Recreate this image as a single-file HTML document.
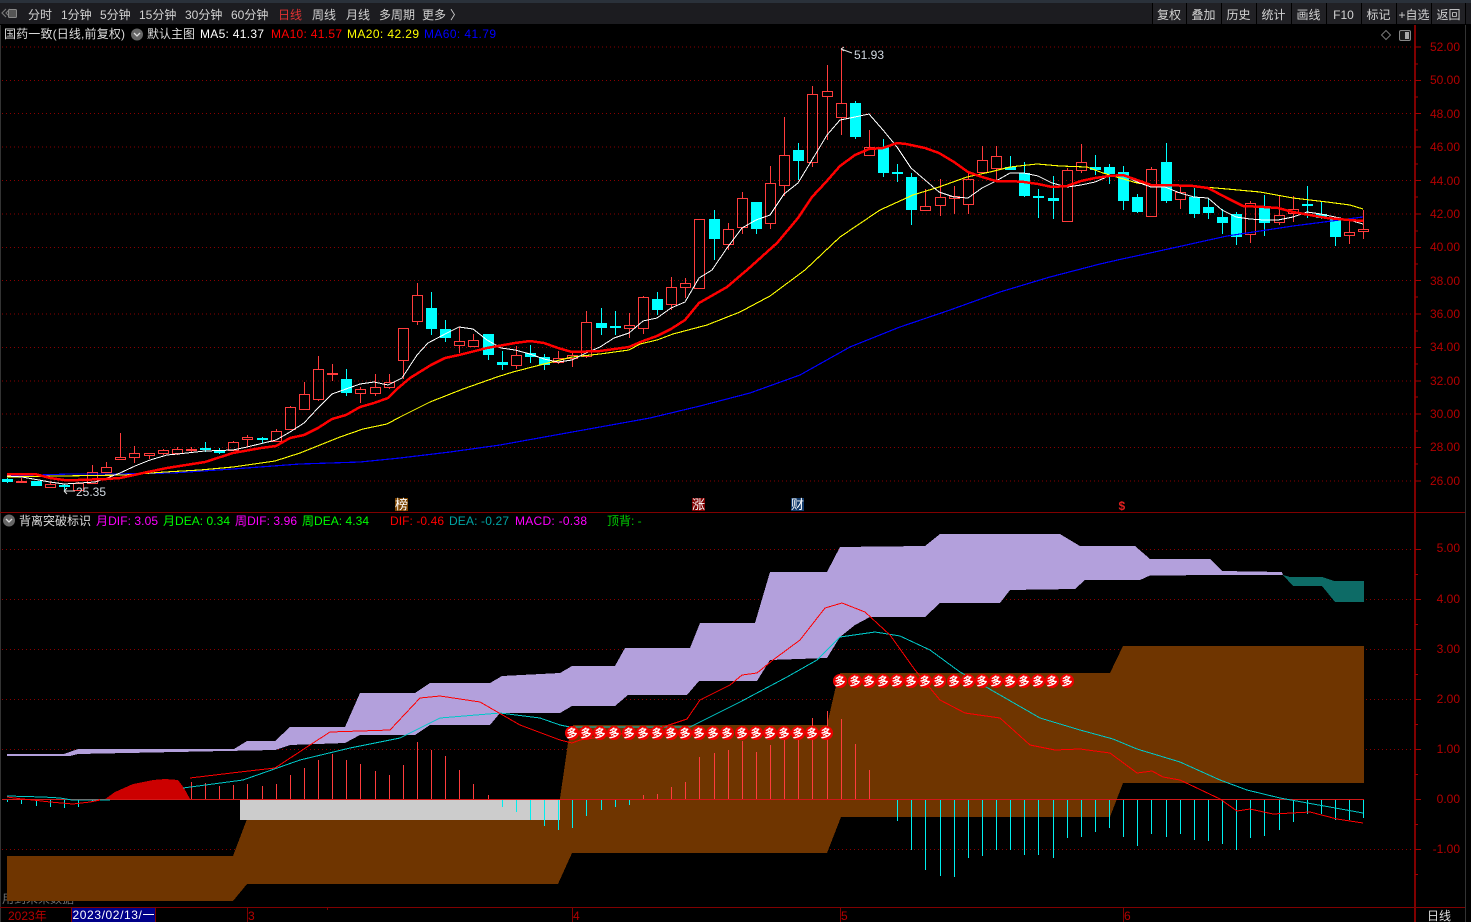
<!DOCTYPE html>
<html lang="zh"><head><meta charset="utf-8"><title>K线</title>
<style>
html,body{margin:0;padding:0;background:#000;width:1471px;height:922px;overflow:hidden}
svg{display:block;position:absolute;left:0;top:0}
text{font-family:"Liberation Sans","Noto Sans CJK SC",sans-serif;font-size:12px;white-space:pre}
.a{fill:#b40000}
.t{fill:#d2d2d2}
.l{fill:none;shape-rendering:crispEdges;stroke-linejoin:round}
</style></head><body>
<svg id="s" width="1471" height="922" viewBox="0 0 1471 922" xmlns="http://www.w3.org/2000/svg">
<rect width="1471" height="922" fill="#000"/>
<!-- toolbar -->
<rect width="1471" height="24" fill="#1c1c20"/>
<rect width="1471" height="3" fill="#2a313a"/>
<rect x="1152" y="3" width="314" height="21" fill="#212125"/>
<path d="M1152.500 3V24M1186.500 3V24M1221.500 3V24M1256.500 3V24M1291.500 3V24M1326.500 3V24M1361.500 3V24M1396.500 3V24M1431.500 3V24M1465.500 3V24" stroke="#000" shape-rendering="crispEdges"/>
<path d="M6 9l-4 4 4 4M10 9l-4 4 4 4" fill="none" stroke="#777" stroke-width="1.2"/>
<rect x="8.500" y="9.500" width="8" height="8" rx="1" fill="#555" stroke="#888"/>
<g class="t">
<text x="28" y="19">分时</text><text x="61" y="19">1分钟</text><text x="100" y="19">5分钟</text><text x="139" y="19">15分钟</text><text x="185" y="19">30分钟</text><text x="231" y="19">60分钟</text>
<text x="278" y="19" style="fill:#e03232">日线</text><text x="312" y="19">周线</text><text x="346" y="19">月线</text><text x="379" y="19">多周期</text><text x="422" y="19">更多</text><text x="450" y="19">〉</text>
<g text-anchor="middle"><text x="1169" y="19">复权</text><text x="1203.500" y="19">叠加</text><text x="1238.500" y="19">历史</text><text x="1273.500" y="19">统计</text><text x="1308.500" y="19">画线</text><text x="1343.500" y="19">F10</text><text x="1378.500" y="19">标记</text><text x="1414" y="19">+自选</text><text x="1448.500" y="19">返回</text></g>
</g>
<!-- grid -->
<g stroke="#8a0000" stroke-dasharray="1 3" shape-rendering="crispEdges">
<path id="g1" d="M2 47H1415M2 80.500H1415M2 113.500H1415M2 147H1415M2 180.500H1415M2 214H1415M2 247.500H1415M2 280.500H1415M2 314H1415M2 347.500H1415M2 381H1415M2 414H1415M2 447.500H1415M2 481H1415"/>
<path d="M2 549.500H1415M2 599.500H1415M2 649.500H1415M2 699.500H1415M2 749.500H1415M2 849.500H1415"/>
</g>
<!-- frame -->
<path d="M0.500 25V922" stroke="#333" shape-rendering="crispEdges"/>
<path d="M1465.500 25V922" stroke="#333" shape-rendering="crispEdges"/>
<path d="M1415 25V922" stroke="#800000" stroke-width="2" shape-rendering="crispEdges"/>
<path d="M0 512.500H1465M0 907.500H1465" stroke="#800000" shape-rendering="crispEdges"/>
<path d="M1415 47h6M1415 80.500h6M1415 113.500h6M1415 147h6M1415 180.500h6M1415 214h6M1415 247.500h6M1415 280.500h6M1415 314h6M1415 347.500h6M1415 381h6M1415 414h6M1415 447.500h6M1415 481h6M1415 64h3M1415 97h3M1415 130h3M1415 164h3M1415 197h3M1415 231h3M1415 264h3M1415 297h3M1415 331h3M1415 364h3M1415 397h3M1415 431h3M1415 464h3M1415 549.500h6M1415 599.500h6M1415 649.500h6M1415 699.500h6M1415 749.500h6M1415 799.500h6M1415 849.500h6M1415 574.500h3M1415 624.500h3M1415 674.500h3M1415 724.500h3M1415 774.500h3M1415 824.500h3M1415 874.500h3" stroke="#a00000" shape-rendering="crispEdges"/>
<g class="a" text-anchor="end">
<text x="1460" y="51">52.00</text><text x="1460" y="84">50.00</text><text x="1460" y="118">48.00</text><text x="1460" y="151">46.00</text><text x="1460" y="185">44.00</text><text x="1460" y="218">42.00</text><text x="1460" y="251">40.00</text><text x="1460" y="285">38.00</text><text x="1460" y="318">36.00</text><text x="1460" y="351">34.00</text><text x="1460" y="385">32.00</text><text x="1460" y="418">30.00</text><text x="1460" y="451">28.00</text><text x="1460" y="485">26.00</text>
<text x="1460" y="552">5.00</text><text x="1460" y="603">4.00</text><text x="1460" y="653">3.00</text><text x="1460" y="703">2.00</text><text x="1460" y="753">1.00</text><text x="1460" y="803">0.00</text><text x="1460" y="853">-1.00</text>
</g>
<!-- info lines -->
<text x="4" y="38" textLength="121" style="fill:#dcdcdc">国药一致(日线,前复权)</text>
<circle cx="137" cy="34.500" r="6" fill="#666"/><path d="M134 33l3 3 3-3" fill="none" stroke="#ddd" stroke-width="1.300"/>
<text x="147" y="38" style="fill:#dcdcdc">默认主图</text>
<text x="200" y="38" textLength="64" style="fill:#fff">MA5: 41.37</text>
<text x="271" y="38" textLength="71" style="fill:#ff0000">MA10: 41.57</text>
<text x="347" y="38" textLength="72" style="fill:#ffff00">MA20: 42.29</text>
<text x="424" y="38" textLength="72" style="fill:#0000ff">MA60: 41.79</text>
<path d="M1386 30.500l4.500 4.500-4.500 4.500-4.500-4.500z" fill="none" stroke="#777"/>
<rect x="1399.500" y="30.500" width="11" height="10" rx="1.500" fill="#1c1c1c" stroke="#888"/><rect x="1405" y="32" width="4" height="7" fill="#aaa"/>
<circle cx="9" cy="520.500" r="6" fill="#666"/><path d="M6 519l3 3 3-3" fill="none" stroke="#ddd" stroke-width="1.300"/>
<text x="19" y="525" style="fill:#dcdcdc">背离突破标识</text>
<text x="96" y="525" textLength="62" style="fill:#ff00ff">月DIF: 3.05</text>
<text x="163" y="525" textLength="67" style="fill:#00ff00">月DEA: 0.34</text>
<text x="235" y="525" textLength="62" style="fill:#ff00ff">周DIF: 3.96</text>
<text x="302" y="525" textLength="67" style="fill:#00ff00">周DEA: 4.34</text>
<text x="390" y="525" textLength="54" style="fill:#ff0000">DIF: -0.46</text>
<text x="449" y="525" textLength="60" style="fill:#00a5a5">DEA: -0.27</text>
<text x="515" y="525" textLength="72" style="fill:#ff00ff">MACD: -0.38</text>
<text x="607" y="525" style="fill:#00d000">顶背: -</text>
<!-- faint text -->
<text x="2" y="903" style="fill:#707070">用到未来数据</text>
<!-- bands -->
<g shape-rendering="crispEdges">
<path fill="#b3a0dc" d="M7 754L64 754L78 749L234 749L247 741L275 741L290 727L345 727L360 693L415 693L430 683L490 683L502 676L560 673L572 666L615 666L625 648L690 648L700 623L755 623L770 572L827 572L840 547L925 546L940 534L1060 534L1080 546L1135 546L1150 559L1210 559L1222 571L1282 572L1283 575L1222 575L1150 575.500L1140 580L1085 580L1075 589L1010 590L1000 603L940 603L925 617L870 617L855 625L840 637L827 658L770 660L757 681L699 681L687 695L628 695L615 706L572 706L560 713L500 713L490 725L430 725L415 735L360 735L345 743L290 745L275 750L78 754L70 756L7 756Z"/>
<path fill="#0d6b66" d="M1283 575L1290 577L1322 577L1334 581L1364 581L1364 602L1335 602L1322 586L1293 586Z"/>
<path fill="#6f3500" d="M7 856L233 856L247 819L557 819L568 743L573 725L827 725L835 690L840 673L1110 673L1123 646L1364 646L1364 783L1123 783L1110 817L841 817L827 853L572 853L558 884L247 884L233 901L7 901Z"/>
<rect x="240" y="800" width="320" height="20" fill="#cccccc"/>
<path fill="#cc0000" d="M104 800L108 797L115 792L124 788L133 784L143 782L153 780L165 779L178 780L184 788L190 799L190 800Z"/>
<path d="M2 799.500H1364" stroke="#d01818"/>
</g>
<!-- labels -->
<rect x="395" y="498" width="13" height="13" fill="#7a4300"/><text x="395" y="509" style="fill:#fff;font-size:13px">榜</text>
<rect x="692" y="498" width="13" height="13" fill="#7d0000"/><text x="692" y="509" style="fill:#fff;font-size:13px">涨</text>
<rect x="791" y="498" width="13" height="13" fill="#123a6a"/><text x="791" y="509" style="fill:#fff;font-size:13px">财</text>
<text x="1118.500" y="510" style="fill:#e02020;font-weight:700">$</text>
<g id="k"></g>
<!-- MA lines -->
<polyline class="l" stroke="#0000ff" stroke-width="1.200" points="7,476 70,474 117,474 173,473 233,469 300,464 360,462 400,458 450,452 500,445 600,427 650,418 700,406 750,393 800,375 850,347 900,327 950,310 1000,292 1050,277 1100,264 1122,259 1150,253 1227,236 1293,226 1363,217"/>
<polyline class="l" stroke="#ffff00" stroke-width="1.100" points="7,477 60,476 125,475 165,472 200,470 233,467 275,461 300,453 320,445 340,437 363,429 387,424 400,417 430,402 463,389 497,377 513,372 540,365 572,357 600,354 629,350 640,344 657,340 673,334 707,325 740,312 770,296 805,270 840,237 880,210 913,195 939,187 967,177 990,172 1010,167 1037,164 1060,166 1087,167 1103,173 1137,183 1160,186 1193,186 1227,189 1260,192 1293,198 1327,202 1350,205 1363,209"/>
<polyline class="l" stroke="#ffffff" stroke-width="1" points="7,476 22,477 50,482 64,484 95,482 107,478 120,473 135,466 150,460 167,455 178,454 205,451 233,450 247,447 276,440 290,432 304,423 318,408 332,394 346,389 360,384 374,382 388,385 402,378 417,355 428,343 447,333 459,327 473,329 487,340 501,348 515,350 530,354 544,359 558,362 572,360 586,353 600,347 614,338 629,333 643,321 657,318 671,308 685,302 699,278 712,270 727,248 742,228 756,220 770,215 784,194 798,183 815,155 827,135 840,120 855,117 869,114 883,130 897,147 911,168 925,180 939,192 954,197 968,198 982,188 996,181 1010,173 1024,173 1038,176 1052,183 1067,187 1081,185 1095,182 1109,176 1123,175 1137,182 1151,187 1165,187 1180,193 1194,197 1208,198 1222,210 1236,217 1250,219 1264,220 1278,220 1293,217 1307,212 1321,214 1335,217 1349,220 1363,224"/>
<polyline class="l" stroke="#ff0000" stroke-width="2.500" points="7,474 35,474 50,478 64,480 78,480 106,479 120,478 134,475 143,473 167,468 205,462 233,453 261,448 276,446 290,438 304,435 318,428 332,419 346,415 360,407 374,403 388,398 397,389 410,378 431,365 445,358 459,355 487,348 515,343 530,341 544,343 558,348 572,352 600,351 629,347 643,341 657,336 671,329 685,320 699,303 713,295 727,287 741,275 747,270 777,243 798,218 812,197 826,182 840,166 855,155 869,149 883,148 897,143 906,144 925,148 939,153 954,162 968,172 982,177 996,181 1010,181 1024,182 1038,184 1052,187 1067,186 1081,181 1095,178 1109,176 1123,175 1137,180 1151,185 1165,185 1193,186 1208,188 1227,198 1243,206 1264,207 1278,208 1293,212 1327,218 1349,220 1363,221"/>
<!-- macd lines -->
<polyline class="l" stroke="#00c8c8" points="7,796 43,797 60,798 72,800 110,800"/>
<polyline class="l" stroke="#00c8c8" points="183,788 243,780 300,760 350,748 400,738 440,718 500,713 540,718 560,725 570,727 690,727 740,702 787,677 817,660 840,637 875,632 900,636 930,650 960,672 1000,695 1040,718 1080,730 1113,739 1137,749 1180,762 1220,780 1247,790 1280,798 1313,804 1363,813"/>
<polyline class="l" stroke="#ff0000" points="7,797 22,799 33,800 50,802 73,804 90,802 100,800"/>
<polyline class="l" stroke="#ff0000" points="190,778 240,772 275,768 310,745 330,732 390,730 420,698 440,696 480,702 520,725 560,740 572,743 580,740 660,728 687,719 700,700 730,685 742,675 757,673 773,660 800,640 825,608 842,603 865,612 890,635 915,670 940,700 965,713 1000,718 1030,745 1055,750 1080,749 1110,753 1137,773 1152,771 1163,777 1180,780 1220,799 1237,811 1250,809 1273,814 1310,812 1337,819 1363,823"/>
<!-- balls -->
<path fill="none" stroke="#ee0000" stroke-width="14" stroke-linecap="round" d="M572 733h.01M586 733h.01M600 733h.01M614 733h.01M629 733h.01M643 733h.01M657 733h.01M671 733h.01M685 733h.01M699 733h.01M713 733h.01M727 733h.01M742 733h.01M756 733h.01M770 733h.01M784 733h.01M798 733h.01M812 733h.01M826 733h.01M840 681h.01M855 681h.01M869 681h.01M883 681h.01M897 681h.01M911 681h.01M925 681h.01M939 681h.01M954 681h.01M968 681h.01M982 681h.01M996 681h.01M1010 681h.01M1024 681h.01M1038 681h.01M1052 681h.01M1067 681h.01"/>
<text y="737" text-anchor="middle" style="fill:#fff;font-size:11px;font-weight:700" x="572 586 600 614 629 643 657 671 685 699 713 727 742 756 770 784 798 812 826">多多多多多多多多多多多多多多多多多多多</text>
<text y="685" text-anchor="middle" style="fill:#fff;font-size:11px;font-weight:700" x="840 855 869 883 897 911 925 939 954 968 982 996 1010 1024 1038 1052 1067">多多多多多多多多多多多多多多多多多</text>
<!-- hi/lo -->
<path d="M841 49l11 4M841 49l3-2M841 49l3 2" fill="none" stroke="#ddd"/>
<text x="854" y="59" style="fill:#d0d8e0">51.93</text>
<path d="M64 491h11M64 491l3-3M64 491l3 3" fill="none" stroke="#ddd"/>
<text x="76" y="496" style="fill:#d0d8e0">25.35</text>
<!-- bottom -->
<text x="8" y="920" class="a">2023年</text>
<rect x="71.500" y="907.500" width="84" height="15" fill="#000088" stroke="#800000"/>
<text x="72.500" y="919" textLength="82" style="fill:#fff">2023/02/13/一</text>
<path d="M247.500 908V922M572.500 908V922M840.500 908V922M1123.500 908V922M327.500 908V910" stroke="#800000" shape-rendering="crispEdges"/>
<text x="248" y="920" class="a">3</text><text x="573" y="920" class="a">4</text><text x="841" y="920" class="a">5</text><text x="1124" y="920" class="a">6</text>
<text x="1427" y="920" style="fill:#dcdcdc">日线</text>
</svg>
<script>
(function(){
var C=[[1,478,479,482,483],[0,478,481,482,483],[1,481,481,486,486],[0,482,484,487,487],[1,484,485,487,492],[0,482,483,490,490],[0,465,472,483,483],[0,462,467,472,472],[0,433,457,459,459],[0,446,453,457,463],
[0,453,453,455,459],[0,449,450,453,455],[0,447,449,453,455],[0,447,449,450,453],[1,442,448,449,452],[1,448,451,452,454],[0,441,442,450,450],[0,435,437,439,447],[1,437,438,439,443],[0,429,431,441,441],
[0,406,407,429,430],[0,382,394,409,409],[0,356,369,399,401],[0,364,373,374,381],[1,369,379,393,396],[0,387,389,393,403],[0,374,387,393,396],[0,374,382,387,389],[0,328,328,360,379],[0,283,295,321,325],
[1,292,308,329,335],[1,320,329,338,342],[0,327,341,345,353],[0,334,340,346,347],[1,334,334,355,360],[1,351,362,365,370],[0,346,355,365,369],[1,345,353,357,363],[1,354,357,365,370],[0,351,358,362,364],
[0,352,355,358,367],[0,311,322,356,358],[1,308,323,328,335],[1,311,326,328,335],[0,313,325,328,338],[0,296,297,328,334],[1,292,299,310,315],[0,277,287,304,310],[0,278,283,287,298],[0,219,219,288,288],
[1,210,219,239,260],[0,223,229,244,250],[0,192,198,227,234],[1,202,202,229,234],[0,166,183,223,229],[0,117,155,185,196],[1,143,150,161,180],[0,86,94,162,167],[0,65,91,96,140],[0,48,103,117,135],
[1,101,103,137,139],[0,130,147,155,155],[1,139,147,173,177],[1,164,172,173,182],[1,173,177,210,225],[0,189,206,210,210],[0,179,197,205,216],[0,186,196,198,214],[0,173,179,204,214],[0,146,160,172,173],
[0,146,156,168,182],[1,156,167,170,170],[1,162,173,196,197],[1,189,196,198,218],[1,176,198,201,219],[0,168,170,221,221],[0,144,162,170,173],[1,155,167,170,175],[1,164,167,174,184],[1,166,172,201,210],
[1,194,197,212,213],[0,167,169,216,216],[1,143,162,201,203],[0,185,192,199,209],[1,188,197,214,218],[1,198,207,213,219],[1,209,217,223,234],[1,212,214,237,245],[0,201,203,234,243],[1,195,207,223,236],
[0,196,215,222,225],[0,196,209,213,222],[1,186,204,205,218],[1,202,214,218,219],[1,219,219,237,246],[0,220,232,235,244],[0,210,229,231,239]];
var H=[802,804,806,807,808,807,802,799,799,799,799,799,799,782,783,786,785,784,786,784,775,768,760,754,760,764,771,775,765,742,750,756,770,784,795,807,812,820,826,830,828,816,810,807,805,795,794,787,782,757,753,750,741,752,745,740,740,718,711,719,744,770,799,821,850,870,876,877,858,856,850,850,855,855,858,838,837,832,828,837,846,834,837,834,840,841,844,850,838,836,830,822,814,814,820,820,818];
var X=function(i){return Math.round(7.3+14.125*i)+.5};
var r='',c='',hc='';
C.forEach(function(k,i){var x=X(i),h=k[1],t=k[2]+.5,b=k[3]+.5,l=k[4];
 if(k[0]){c+='M'+x+' '+h+'V'+l;hc+='<rect x="'+(x-5.5)+'" y="'+k[2]+'" width="11" height="'+Math.max(2,k[3]-k[2])+'" fill="#00ffff"/>';}
 else{r+='M'+x+' '+h+'V'+t+'M'+x+' '+b+'V'+l+'M'+(x-5)+' '+t+'H'+(x+5)+'V'+b+'H'+(x-5)+'Z';}
});
var p='',q='';
H.forEach(function(v,i){var x=X(i);if(v<799)p+='M'+x+' '+v+'V799';else if(v>800)q+='M'+x+' 800V'+v;});
document.getElementById('k').innerHTML='<g shape-rendering="crispEdges"><path d="'+c+'" stroke="#00ffff" fill="none"/>'+hc+'<path d="'+r+'" stroke="#ff3c3c" fill="none"/><path d="'+p+'" stroke="#ff3c3c" fill="none"/><path d="'+q+'" stroke="#00eeee" fill="none"/></g>';
})();
</script>
</body></html>
